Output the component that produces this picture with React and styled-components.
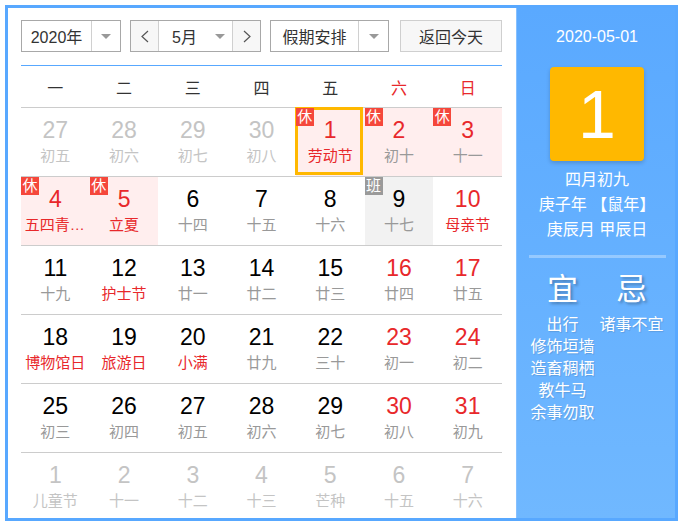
import React from 'react';
import styled, { createGlobalStyle } from 'styled-components';

const Global = createGlobalStyle`
  html, body { margin: 0; padding: 0; background: #fff; }
  body { font-family: "Liberation Sans", "Noto Sans CJK SC", sans-serif; }
`;

const RED = '#e8282b';

const Frame = styled.div`
  box-sizing: border-box;
  margin: 5px 0 0 5px;
  width: 673px;
  height: 516px;
  border: 3px solid #58a8ff;
  display: flex;
  overflow: hidden;
  background: #fff;
`;

const Main = styled.div`
  width: 508px;
  flex: none;
  box-sizing: border-box;
  padding: 12px 14px 0 13px;
  display: flex;
  flex-direction: column;
  & > * { flex-shrink: 0; }
`;

const Toolbar = styled.div`
  display: flex;
  height: 32px;
  font-size: 16px;
  color: #333;
  white-space: nowrap;
`;

const Select = styled.div`
  box-sizing: border-box;
  display: flex;
  width: ${p => p.$w}px;
  margin-right: ${p => p.$mr || 0}px;
  border: 1px solid #a8a8a8;
  background: #fff;
`;

const SelectLabel = styled.div`
  width: ${p => p.$w}px;
  display: flex;
  align-items: center;
  justify-content: center;
  border-right: 1px solid #d0d0d0;
`;

const ArrowBox = styled.div`
  flex: 1;
  display: flex;
  align-items: center;
  justify-content: center;
`;

const Caret = styled.span`
  flex: none;
  width: 0;
  height: 0;
  border-left: 5px solid transparent;
  border-right: 5px solid transparent;
  border-top: 5px solid #999;
`;

const StepBtn = styled.div`
  width: ${p => p.$w}px;
  flex: none;
  display: flex;
  align-items: center;
  justify-content: center;
  background: #f7f7f7;
  ${p => (p.$side === 'left' ? 'border-right: 1px solid #d0d0d0;' : 'border-left: 1px solid #d0d0d0;')}
`;

const MonthMid = styled.div`
  flex: 1;
  display: flex;
  align-items: center;
  padding-left: 13px;
  gap: 18px;
`;

const TodayBtn = styled.div`
  box-sizing: border-box;
  flex: 1;
  border: 1px solid #cfcfcf;
  background: #f7f7f7;
  display: flex;
  align-items: center;
  justify-content: center;
`;

const BlueRule = styled.div`
  margin-top: 13px;
  height: 1px;
  background: #58a8ff;
`;

const WeekHead = styled.div`
  display: grid;
  grid-template-columns: repeat(7, 1fr);
  height: 41px;
  align-items: center;
  text-align: center;
  font-size: 16px;
`;

const WeekName = styled.div`
  color: ${p => (p.$red ? RED : '#333')};
`;

const WeekRow = styled.div`
  box-sizing: border-box;
  display: grid;
  grid-template-columns: repeat(7, 1fr);
  height: 69px;
  border-top: 1px solid #cccccc;
`;

const bgFor = t => (t === 'rest' ? '#ffeeee' : t === 'work' ? '#f2f2f2' : 'transparent');

const Cell = styled.div`
  position: relative;
  text-align: center;
  padding-top: 9px;
  background: ${p => bgFor(p.$type)};
  &::after {
    content: '';
    display: ${p => (p.$selected ? 'block' : 'none')};
    position: absolute;
    top: -1px;
    left: -1px;
    right: 2px;
    bottom: 1px;
    border: 3.5px solid #ffb800;
    pointer-events: none;
  }
`;

const Num = styled.div`
  font-size: 23px;
  line-height: 27px;
  color: ${p => p.$c};
`;

const Lunar = styled.div`
  font-size: 15px;
  line-height: 24px;
  color: ${p => p.$c};
  max-width: 61px;
  margin: 0 auto;
  white-space: nowrap;
  overflow: hidden;
  text-overflow: ellipsis;
`;

const Badge = styled.span`
  position: absolute;
  top: 0;
  left: 0;
  z-index: 1;
  width: 18px;
  height: 18px;
  line-height: 18px;
  font-size: 15px;
  text-align: center;
  color: #fff;
  background: ${p => (p.$work ? '#9a9a9a' : '#f5473b')};
`;

const Side = styled.div`
  flex: 1;
  box-sizing: border-box;
  border-left: 1px solid #86c0ff;
  background: linear-gradient(#5aa9ff, #70b8ff);
  color: #fff;
  display: flex;
  flex-direction: column;
  align-items: center;
  padding: 19px 0 0 2px;
  & > * { flex-shrink: 0; }
`;

const DateText = styled.div`
  font-size: 16px;
  line-height: 20px;
`;

const DayBox = styled.div`
  margin-top: 20px;
  width: 94px;
  height: 94px;
  border-radius: 4px;
  background: #ffb800;
  box-shadow: 0 2px 4px rgba(0, 0, 0, 0.18);
  font-size: 68px;
  line-height: 94px;
  text-align: center;
`;

const LunarInfo = styled.div`
  margin-top: 6px;
  font-size: 16px;
  line-height: 25px;
  text-align: center;
`;

const Sep = styled.div`
  margin-top: 13px;
  width: 137px;
  height: 3px;
  background: rgba(255, 255, 255, 0.32);
`;

const YiJi = styled.div`
  margin-top: 12px;
  display: grid;
  grid-template-columns: 69px 69px;
  text-align: center;
`;

const YiJiCol = styled.div`
  display: flex;
  flex-direction: column;
  align-items: center;
`;

const YiJiHead = styled.div`
  font-size: 31px;
  line-height: 40px;
  text-shadow: 2px 2px 3px rgba(0, 0, 0, 0.3);
  margin-bottom: 4px;
`;

const YiJiItem = styled.div`
  font-size: 16px;
  line-height: 22px;
  white-space: nowrap;
  text-shadow: 1px 1px 1px rgba(0, 0, 0, 0.12);
`;

const Chevron = ({ dir }) => (
  <svg width="8" height="13" viewBox="0 0 8 13">
    <polyline
      points={dir === 'left' ? '7,1 1,6.5 7,12' : '1,1 7,6.5 1,12'}
      fill="none"
      stroke="#555"
      strokeWidth="1.2"
    />
  </svg>
);

// o: other month, r: red number, f: festival (red lunar), t: rest/work badge, s: selected
const days = [
  { n: 27, l: '初五', o: 1 }, { n: 28, l: '初六', o: 1 }, { n: 29, l: '初七', o: 1 }, { n: 30, l: '初八', o: 1 },
  { n: 1, l: '劳动节', r: 1, f: 1, t: 'rest', s: 1 }, { n: 2, l: '初十', r: 1, t: 'rest' }, { n: 3, l: '十一', r: 1, t: 'rest' },
  { n: 4, l: '五四青年节', r: 1, f: 1, t: 'rest' }, { n: 5, l: '立夏', r: 1, f: 1, t: 'rest' }, { n: 6, l: '十四' },
  { n: 7, l: '十五' }, { n: 8, l: '十六' }, { n: 9, l: '十七', t: 'work' }, { n: 10, l: '母亲节', r: 1, f: 1 },
  { n: 11, l: '十九' }, { n: 12, l: '护士节', f: 1 }, { n: 13, l: '廿一' }, { n: 14, l: '廿二' },
  { n: 15, l: '廿三' }, { n: 16, l: '廿四', r: 1 }, { n: 17, l: '廿五', r: 1 },
  { n: 18, l: '博物馆日', f: 1 }, { n: 19, l: '旅游日', f: 1 }, { n: 20, l: '小满', f: 1 }, { n: 21, l: '廿九' },
  { n: 22, l: '三十' }, { n: 23, l: '初一', r: 1 }, { n: 24, l: '初二', r: 1 },
  { n: 25, l: '初三' }, { n: 26, l: '初四' }, { n: 27, l: '初五' }, { n: 28, l: '初六' },
  { n: 29, l: '初七' }, { n: 30, l: '初八', r: 1 }, { n: 31, l: '初九', r: 1 },
  { n: 1, l: '儿童节', o: 1 }, { n: 2, l: '十一', o: 1 }, { n: 3, l: '十二', o: 1 }, { n: 4, l: '十三', o: 1 },
  { n: 5, l: '芒种', o: 1 }, { n: 6, l: '十五', o: 1 }, { n: 7, l: '十六', o: 1 },
];

const weeks = [];
for (let i = 0; i < days.length; i += 7) weeks.push(days.slice(i, i + 7));

const weekNames = ['一', '二', '三', '四', '五', '六', '日'];

const yi = ['出行', '修饰垣墙', '造畜稠栖', '教牛马', '余事勿取'];
const ji = ['诸事不宜'];

export default function App() {
  return (
    <>
      <Global />
      <Frame>
        <Main>
          <Toolbar>
            <Select $w={100} $mr={9}>
              <SelectLabel $w={69}>2020年</SelectLabel>
              <ArrowBox><Caret /></ArrowBox>
            </Select>
            <Select $w={131} $mr={9}>
              <StepBtn $w={27} $side="left"><Chevron dir="left" /></StepBtn>
              <MonthMid>5月<Caret /></MonthMid>
              <StepBtn $w={27} $side="right"><Chevron dir="right" /></StepBtn>
            </Select>
            <Select $w={119} $mr={11}>
              <SelectLabel $w={87}>假期安排</SelectLabel>
              <ArrowBox><Caret /></ArrowBox>
            </Select>
            <TodayBtn>返回今天</TodayBtn>
          </Toolbar>
          <BlueRule />
          <WeekHead>
            {weekNames.map((w, i) => (
              <WeekName key={w} $red={i >= 5}>{w}</WeekName>
            ))}
          </WeekHead>
          {weeks.map((wk, wi) => (
            <WeekRow key={wi}>
              {wk.map((d, di) => {
                const numColor = d.o ? '#c4c4c4' : d.r ? RED : '#000';
                const lunarColor = d.o ? '#c4c4c4' : d.f ? RED : '#999';
                return (
                  <Cell key={di} $type={d.t} $selected={!!d.s}>
                    {d.t && <Badge $work={d.t === 'work'}>{d.t === 'work' ? '班' : '休'}</Badge>}
                    <Num $c={numColor}>{d.n}</Num>
                    <Lunar $c={lunarColor}>{d.l}</Lunar>
                  </Cell>
                );
              })}
            </WeekRow>
          ))}
        </Main>
        <Side>
          <DateText>2020-05-01</DateText>
          <DayBox>1</DayBox>
          <LunarInfo>
            <div>四月初九</div>
            <div>庚子年 【鼠年】</div>
            <div>庚辰月 甲辰日</div>
          </LunarInfo>
          <Sep />
          <YiJi>
            <YiJiCol>
              <YiJiHead>宜</YiJiHead>
              {yi.map(t => <YiJiItem key={t}>{t}</YiJiItem>)}
            </YiJiCol>
            <YiJiCol>
              <YiJiHead>忌</YiJiHead>
              {ji.map(t => <YiJiItem key={t}>{t}</YiJiItem>)}
            </YiJiCol>
          </YiJi>
        </Side>
      </Frame>
    </>
  );
}
